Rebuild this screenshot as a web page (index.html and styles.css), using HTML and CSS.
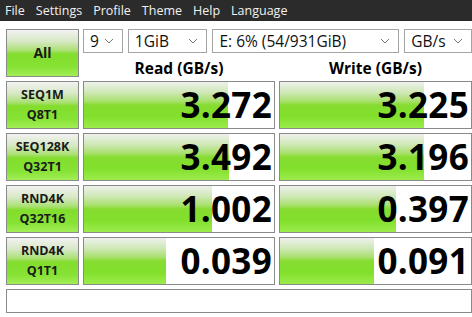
FILE: index.html
```html
<!DOCTYPE html>
<html lang="en">
<head>
    <meta charset="UTF-8">
    <title>CrystalDiskMark</title>
    <link rel="stylesheet" href="styles.css">
</head>
<body>
    <div class="menu-bar">
        <span class="menu-item">File</span>
        <span class="menu-item">Settings</span>
        <span class="menu-item">Profile</span>
        <span class="menu-item">Theme</span>
        <span class="menu-item">Help</span>
        <span class="menu-item">Language</span>
    </div>

    <div class="main">
        <button class="green-btn all-btn">All</button>

        <div class="controls">
            <div class="combos">
                <div class="combo combo-count">9<svg class="chev" viewBox="0 0 10 6"><path d="M1 1l4 4 4-4" fill="none" stroke="currentColor" stroke-width="1"/></svg></div>
                <div class="combo combo-size">1GiB<svg class="chev" viewBox="0 0 10 6"><path d="M1 1l4 4 4-4" fill="none" stroke="currentColor" stroke-width="1"/></svg></div>
                <div class="combo combo-drive">E: 6% (54/931GiB)<svg class="chev" viewBox="0 0 10 6"><path d="M1 1l4 4 4-4" fill="none" stroke="currentColor" stroke-width="1"/></svg></div>
                <div class="combo combo-unit">GB/s<svg class="chev" viewBox="0 0 10 6"><path d="M1 1l4 4 4-4" fill="none" stroke="currentColor" stroke-width="1"/></svg></div>
            </div>
            <div class="headers">
                <div class="col-title">Read (GB/s)</div>
                <div class="col-title">Write (GB/s)</div>
            </div>
        </div>

        <button class="green-btn test-btn">SEQ1M<br>Q8T1</button>
        <div class="result"><div class="bar" style="width: 76%"></div><span class="value">3.272</span></div>
        <div class="result"><div class="bar" style="width: 75.5%"></div><span class="value">3.225</span></div>

        <button class="green-btn test-btn">SEQ128K<br>Q32T1</button>
        <div class="result"><div class="bar" style="width: 76.5%"></div><span class="value">3.492</span></div>
        <div class="result"><div class="bar" style="width: 75.5%"></div><span class="value">3.196</span></div>

        <button class="green-btn test-btn">RND4K<br>Q32T16</button>
        <div class="result"><div class="bar" style="width: 67.5%"></div><span class="value">1.002</span></div>
        <div class="result"><div class="bar" style="width: 60.5%"></div><span class="value">0.397</span></div>

        <button class="green-btn test-btn">RND4K<br>Q1T1</button>
        <div class="result"><div class="bar" style="width: 43%"></div><span class="value">0.039</span></div>
        <div class="result"><div class="bar" style="width: 49%"></div><span class="value">0.091</span></div>

        <div class="status"></div>
    </div>
</body>
</html>
```

FILE: styles.css
```css
* {
    margin: 0;
    padding: 0;
    box-sizing: border-box;
}

body {
    font-family: 'Open Sans', 'Noto Sans', sans-serif;
    background: #ffffff;
    color: #000;
    width: 472px;
    height: 317px;
    overflow: hidden;
}

.menu-bar {
    height: 21px;
    background: #2b2b2b;
    display: flex;
    align-items: center;
    padding-left: 5px;
    gap: 11px;
}

.menu-item {
    color: #f2f2f2;
    font-size: 12.5px;
    line-height: 21px;
}

.main {
    display: grid;
    grid-template-columns: 73px 192px 193px;
    grid-template-rows: 48px repeat(4, 48px) 24px;
    column-gap: 4px;
    row-gap: 4px;
    padding: 8px 2px 0 6px;
}

.green-btn {
    font-family: inherit;
    border: 1px solid #8a8a8a;
    background: linear-gradient(to bottom, #f2f2f2 0%, #d6e8c4 25%, #a9e070 45%, #82dd2c 52%, #86e234 80%, #a2ee58 100%);
    color: #1a1a1a;
    font-weight: 700;
    font-size: 12.5px;
    line-height: 20px;
}

.all-btn {
    font-size: 14px;
}

.controls {
    grid-column: 2 / 4;
    display: flex;
    flex-direction: column;
}

.combos {
    display: flex;
    gap: 5px;
    height: 24px;
}

.combo {
    display: flex;
    align-items: center;
    justify-content: space-between;
    border: 1px solid #a5a5a5;
    background: #fff;
    font-size: 15.5px;
    padding: 0 8px 0 6px;
    color: #111;
}

.combo-count { width: 40px; }
.combo-size { width: 80px; }
.combo-drive { width: 188px; }
.combo-unit { width: 68px; }

.chev {
    width: 10px;
    height: 6px;
    color: #777;
}

.headers {
    display: grid;
    grid-template-columns: 192px 193px;
    column-gap: 4px;
    flex: 1;
    padding-top: 4px;
}

.col-title {
    text-align: center;
    font-weight: 700;
    font-size: 15.5px;
    line-height: 22px;
}

.result {
    position: relative;
    border: 1px solid #8a8a8a;
    background: #fff;
    display: flex;
    align-items: center;
    justify-content: flex-end;
}

.bar {
    position: absolute;
    top: 0;
    left: 0;
    bottom: 0;
    background: linear-gradient(to bottom, #eef1ec 0%, #d0e8b8 22%, #a8e06c 42%, #86dc30 50%, #82e02c 75%, #9cec4c 100%);
}

.value {
    position: relative;
    font-weight: 700;
    font-size: 35px;
    line-height: 46px;
    padding-right: 2px;
    letter-spacing: 0.3px;
}

.status {
    grid-column: 1 / 4;
    border: 1px solid #8a8a8a;
    background: #fff;
}
```
